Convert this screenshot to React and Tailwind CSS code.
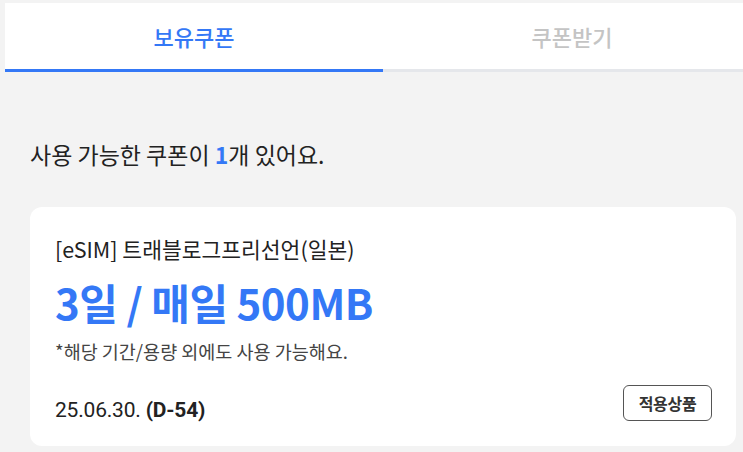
import React from "react";

export default function App() {
  const font = { fontFamily: '"Noto Sans CJK KR", "Noto Sans", sans-serif' };
  return (
    <div className="h-[452px] w-[743px] overflow-hidden bg-[#f3f3f3] pl-[5px] pt-[3px]" style={font}>
      <div className="w-[756px]">
        <div className="flex h-[69px] bg-white border-b-[3px] border-[#e5e7eb]">
          <div className="relative flex w-1/2 items-center justify-center">
            <span className="text-[22px] font-medium text-[#3478f6]">보유쿠폰</span>
            <div className="absolute left-0 right-0 -bottom-[3px] h-[3px] bg-[#3478f6]" />
          </div>
          <div className="flex w-1/2 items-center justify-center">
            <span className="text-[22px] font-medium text-[#c4c4c4]">쿠폰받기</span>
          </div>
        </div>
        <div className="px-[25px]">
          <p className="mt-[67px] text-[23px] leading-[30px] text-[#222]">
            사용 가능한 쿠폰이 <span className="font-bold text-[#3478f6]">1</span>개 있어요.
          </p>
          <div className="mt-[38px] rounded-[12px] bg-white pl-[25px] pr-[24px] pt-[27px] pb-[25px]">
            <p className="text-[21.5px] leading-[30px] text-[#222]">[eSIM] 트래블로그프리선언(일본)</p>
            <p className="mt-[13px] text-[42px] font-bold leading-[50px] text-[#3478f6] tracking-[-0.5px]">3일 / 매일 500MB</p>
            <p className="mt-[11px] text-[18.5px] leading-[26px] text-[#444]">*해당 기간/용량 외에도 사용 가능해요.</p>
            <div className="mt-[21px] flex items-end justify-between">
              <p className="mb-[-2px] text-[21px] leading-[26px] text-[#222] tracking-[-0.2px]" style={{ fontFamily: '"Roboto", "Noto Sans CJK KR", sans-serif' }}>
                25.06.30. <span className="font-bold">(D-54)</span>
              </p>
              <button className="h-[36px] w-[89px] rounded-[6px] border-[1.5px] border-[#555] bg-white text-[16px] font-bold text-[#333] tracking-[-0.3px]">
                적용상품
              </button>
            </div>
          </div>
        </div>
      </div>
    </div>
  );
}
